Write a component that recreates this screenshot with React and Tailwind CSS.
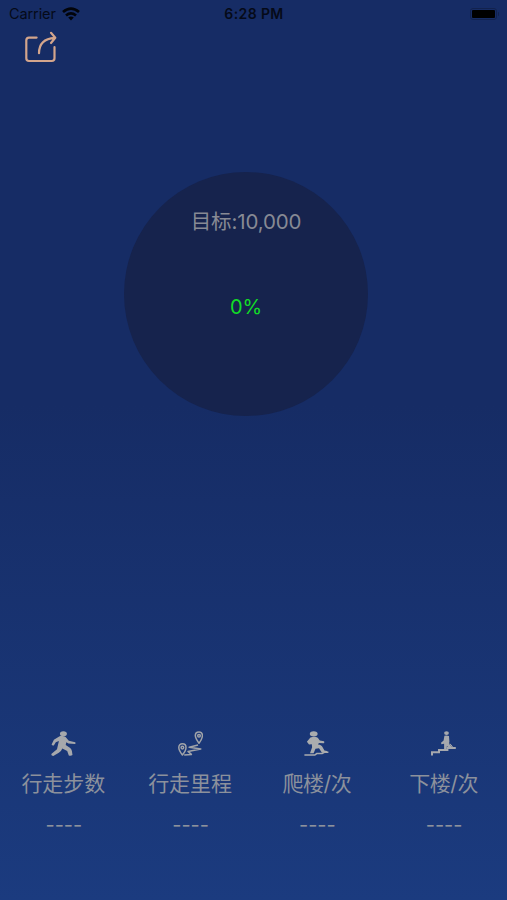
import React from 'react'

const WalkIcon = () => (
    <svg viewBox="0 0 25 25" className="w-[25px] h-[25px]" fill="#a6a8ac">
        <ellipse cx="12.4" cy="2.7" rx="3.5" ry="2.5" />
        <path d="M8.2 5.4 C10 4.8 13 5 14.6 6.1 L17.8 9.7 L24.2 11.3 Q25 12.1 24.1 13 L17.4 12.5 L15.3 11.2 L14.7 14.1 L19.2 17 Q20.7 18.4 20.9 20 L21.5 24 Q19.7 25.3 17.8 24.4 L16.2 19.9 L11.3 17.4 Q10.2 20.5 7.8 21.7 L2.3 24.9 Q0.1 24.7 0.3 22.9 L6 18.2 L7.9 9.9 L4.8 11.3 L2.8 14.4 Q1.1 14.8 0.6 13.4 L2.9 8.8 Z" />
    </svg>
)

const RouteIcon = () => (
    <svg viewBox="0 0 25 25" className="w-[25px] h-[25px]" fill="none" stroke="#a0a3a9" strokeWidth="1.5" strokeLinejoin="round">
        <path d="M21 12.3 C18.3 8.6 17.3 7 17.3 4.6 C17.3 2.2 18.8 0.9 21 0.9 C23.2 0.9 24.4 2.3 24.4 4.6 C24.4 7 23.6 8.9 21 12.3 Z" />
        <circle cx="21" cy="4.7" r="1.3" />
        <path d="M4.4 24 C1.8 20.6 0.8 19 0.8 16.5 C0.8 14.2 2.2 12.8 4.4 12.8 C6.7 12.8 8 14.2 8 16.5 C8 19 7.1 20.7 4.4 24 Z" />
        <circle cx="4.4" cy="16.6" r="1.3" />
        <path d="M20 14 L11.2 16.3 L22.8 18 L10 20.4 L13.4 23.4 L6.2 24.1" />
    </svg>
)

const ClimbIcon = () => (
    <svg viewBox="0 0 25 25" className="w-[25px] h-[25px]" fill="#aaacae">
        <ellipse cx="9.7" cy="2.8" rx="3.9" ry="2.6" />
        <path d="M6.4 6.6 Q10.5 5 13.8 6.7 L15.8 9.6 L20 10.3 Q21 11.4 19.8 12.3 L14.9 12 L14 13.4 Q17.8 13.7 18.6 16.3 L20.4 19.6 L23 19.9 Q24 21 22.8 21.9 L17.9 21.7 L15 17.3 L11.5 17.7 L9.6 22.3 L6 22.2 L8.1 16.2 L7.8 13.2 L5 13.6 L2.9 10.8 Z" />
        <path d="M0.4 24 H10.8 L12.7 22.6 H18.2 L20.8 21.2 H24.4" fill="none" stroke="#aaacae" strokeWidth="1.5" />
    </svg>
)

const DescendIcon = () => (
    <svg viewBox="0 0 25 25" className="w-[25px] h-[25px]" fill="#a6a8ad">
        <ellipse cx="15.5" cy="2.1" rx="2.4" ry="1.9" />
        <path d="M13.4 4.8 Q15.5 3.9 18 5 L18.4 10.8 L17.9 12.8 L21 15.8 L20.4 17.8 L15.9 15.2 L15.3 18.3 L13.1 18.3 L13.1 12.8 L10.4 13.2 L10 11.7 L12.6 9.6 Z" />
        <path d="M1 24.6 V21.3 H8 V19.1 H16.4 V16.9 H24.8" fill="none" stroke="#a6a8ad" strokeWidth="2" />
        <path d="M18.8 12.6 L21.6 15.8" stroke="#a6a8ad" strokeWidth="1" />
    </svg>
)

const stats = [
    { label: '行走步数', value: '----', Icon: WalkIcon },
    { label: '行走里程', value: '----', Icon: RouteIcon },
    { label: '爬楼/次', value: '----', Icon: ClimbIcon },
    { label: '下楼/次', value: '----', Icon: DescendIcon },
]

const StatusBar = () => (
    <div className="h-7 grid grid-cols-3 items-center pl-[9px] pr-[8px] text-[#050a18]">
        <div className="flex items-center gap-[6px] text-[14.5px] leading-7">
            <span className="tracking-[-0.1px]">Carrier</span>
            <svg viewBox="0 0 18 14" className="w-[18px] h-[14px]" fill="none" stroke="#02040a" strokeWidth="2.7">
                <path d="M1 5 Q9 -1.8 17 5" />
                <path d="M4 8.5 Q9 4.3 14 8.5" />
                <path d="M6.2 10.6 Q9 8.5 11.8 10.6 L9 13.6 Z" fill="#02040a" stroke="none" />
            </svg>
        </div>
        <div className="text-center text-[14px] font-semibold leading-7 tracking-[0.4px]">6:28 PM</div>
        <div className="flex items-center justify-end">
            <div className="w-[27px] h-[12px] rounded-[3px] border border-[#12224e] p-px">
                <div className="w-full h-full bg-black rounded-[1px]" />
            </div>
            <div className="w-[1px] h-[4px] ml-px rounded-r bg-[#12224e]" />
        </div>
    </div>
)

const App = () => {
    return (
        <div className="w-full h-[900px] overflow-hidden flex flex-col bg-linear-to-b from-[#162c65] from-45% to-[#1b3b7f] font-['Inter','Noto_Sans_CJK_SC',sans-serif]">
            <StatusBar />
            <button className="w-8 h-9 ml-[25px] mt-[3px]">
                <svg viewBox="0 0 32 36" className="w-8 h-9" fill="none" stroke="#d3a58c" strokeWidth="2.2" strokeLinecap="round" strokeLinejoin="round">
                    <path d="M11.6 6.6 H4 Q1.3 6.6 1.3 9.3 V27.3 Q1.3 30 4 30 H26.8 Q29.5 30 29.5 27.3 V16.2" />
                    <path d="M14 22.2 C14 13 19 7.5 29.8 6.8 M26 1.8 L30.3 6.7 L26 12" />
                </svg>
            </button>
            <div className="w-[244px] h-[244px] mt-[105px] ml-[124px] rounded-full bg-[#16234d] flex flex-col items-center">
                <p className="mt-[35px] h-[30px] text-[20.5px] leading-[30px] tracking-[-0.15px] text-[#878a94]">目标:10,000</p>
                <p className="mt-[55px] h-[30px] text-[20px] leading-[30px] tracking-[-0.2px] text-[#12dc27]">0%</p>
            </div>
            <div className="mt-auto h-[169px] grid grid-cols-4">
                {stats.map(({ label, value, Icon }) => (
                    <div key={label} className="flex flex-col items-center">
                        <Icon />
                        <p className={`mt-[13px] h-[30px] text-[21px] leading-[30px] text-[#8c919c] ${label.includes('/') ? 'tracking-[-0.5px]' : ''}`}>{label}</p>
                        <p className="mt-[11px] h-[30px] pl-px text-[20px] leading-[30px] text-[#8c919c]">{value}</p>
                    </div>
                ))}
            </div>
        </div>
    )
}

export default App
